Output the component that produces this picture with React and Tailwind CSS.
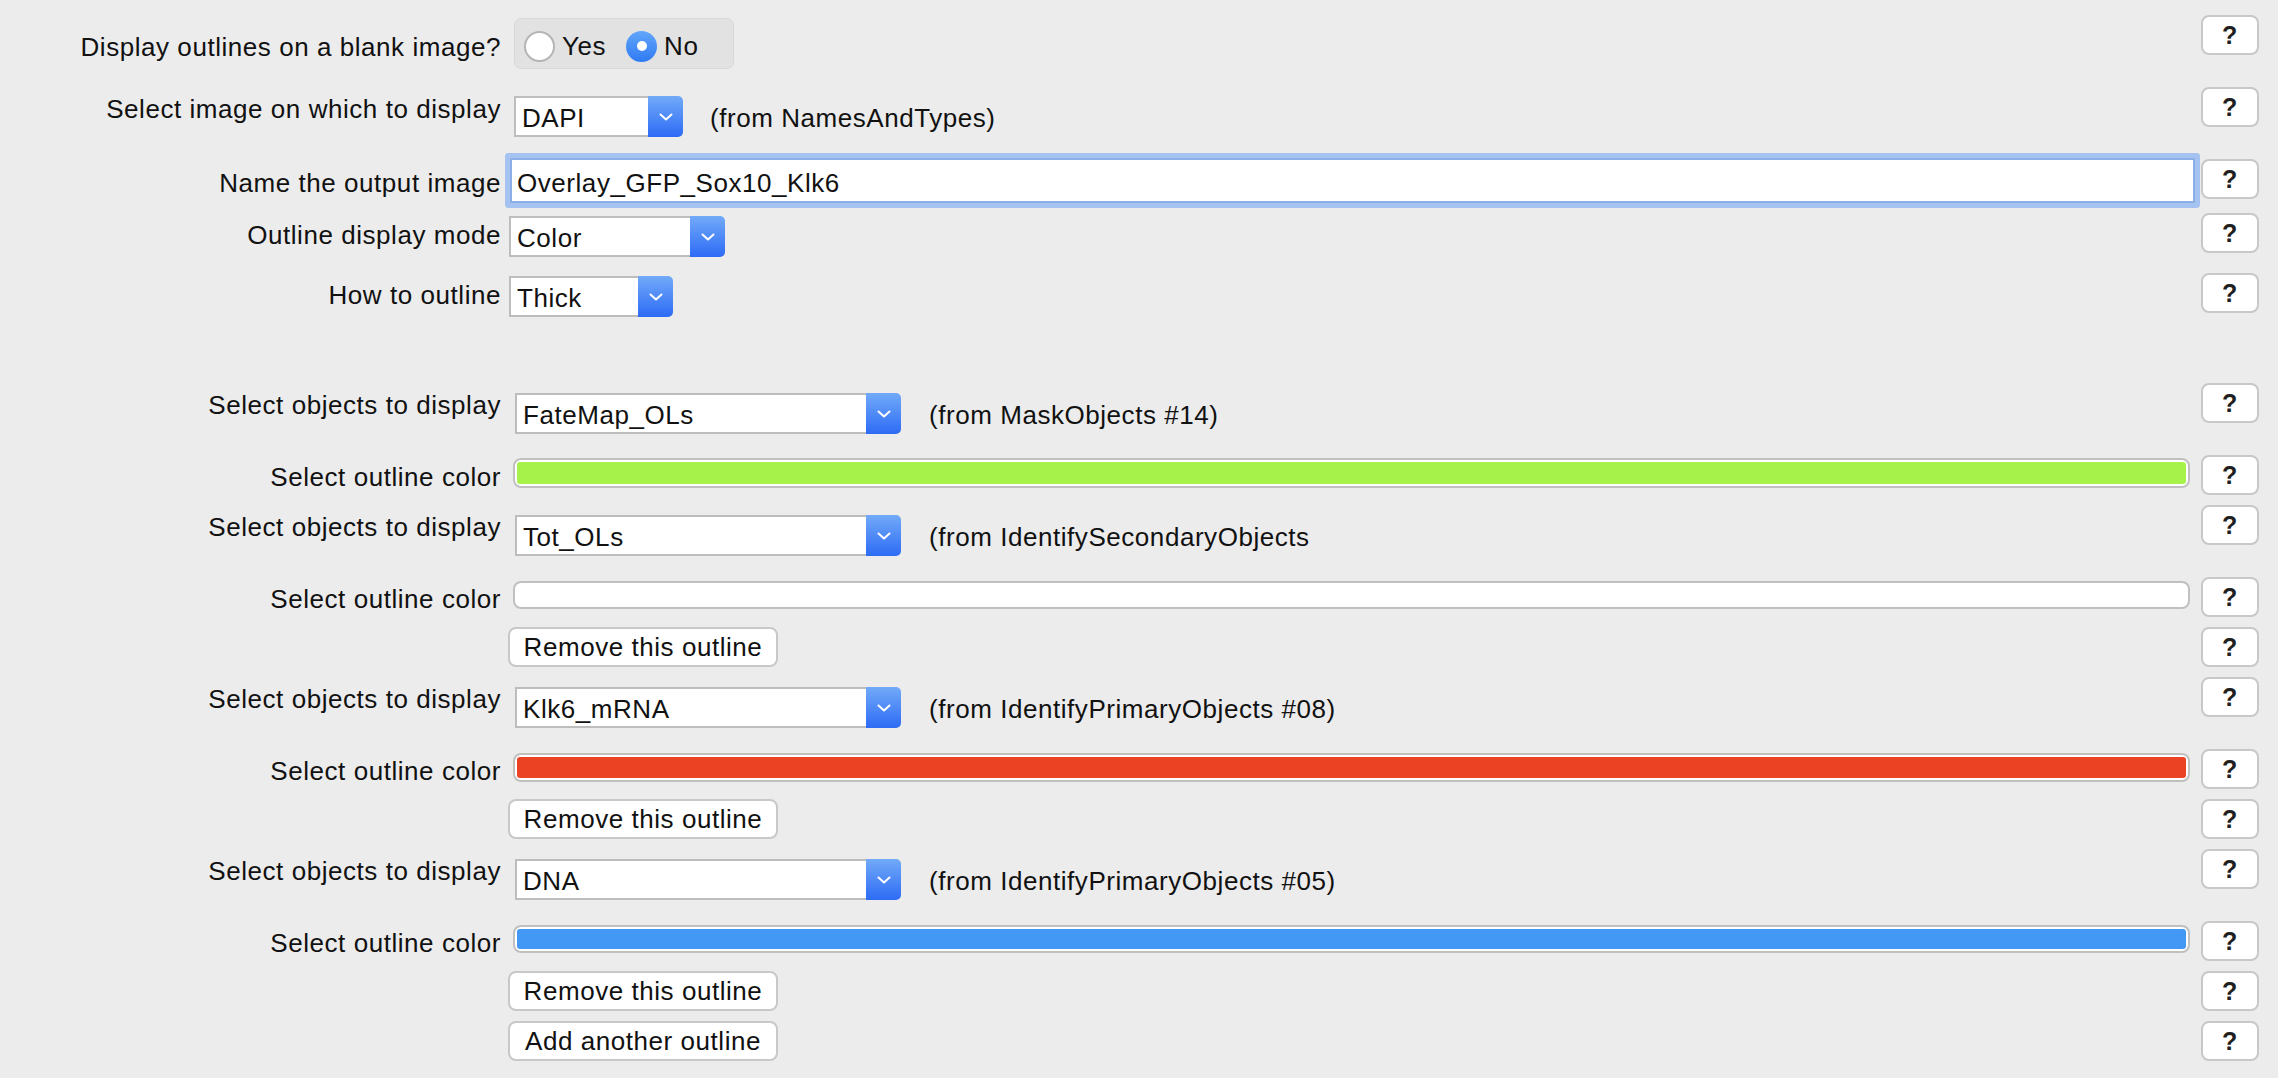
import React from "react";

function Help() {
  return (
    <div className="w-[58px] h-[40px] shrink-0 rounded-[8px] border-2 border-[#c8c8c8] bg-white flex items-center justify-center text-[25px] font-bold leading-none text-[#1f1f1f]">
      ?
    </div>
  );
}

function Label({ text, pad }) {
  return (
    <div className={`w-[501px] shrink-0 text-right leading-[30px] whitespace-nowrap ${pad}`}>
      {text}
    </div>
  );
}

function Chevron() {
  return (
    <svg width="14" height="8" viewBox="0 0 14 8" fill="none">
      <polyline points="1.5,1.5 7,6.5 12.5,1.5" stroke="white" strokeWidth="2" strokeLinecap="round" strokeLinejoin="round" />
    </svg>
  );
}

function Select({ w, value }) {
  return (
    <div className={`flex h-[41px] shrink-0 ${w}`}>
      <div className="flex-1 bg-white border-2 border-r-0 border-[#bdbdbd] pl-[6px] pt-[5px] leading-[30px] whitespace-nowrap overflow-hidden">
        {value}
      </div>
      <div className="w-[35px] h-[41px] rounded-r-[5px] bg-[linear-gradient(to_bottom,#72aaf8,#2d6bf5)] flex items-center justify-center">
        <Chevron />
      </div>
    </div>
  );
}

function Bar({ color, h }) {
  return (
    <div className={`flex-1 mr-[11px] ml-[12px] ${h} rounded-[8px] border-2 border-[#c0c0c0] bg-white p-[2px]`}>
      <div className={`w-full h-full rounded-[3px] ${color}`} />
    </div>
  );
}

function Button({ text }) {
  return (
    <div className="ml-[7px] w-[270px] h-[40px] rounded-[8px] border-2 border-[#c8c8c8] bg-white flex items-center justify-center leading-[30px] whitespace-nowrap">
      {text}
    </div>
  );
}

function ObjRow({ value, from }) {
  return (
    <div className="flex items-start h-[72px]">
      <Label text="Select objects to display" pad="pt-[7px]" />
      <div className="flex-1 flex items-start mt-[10px] ml-[14px]">
        <Select w="w-[386px]" value={value} />
        <div className="ml-[28px] pt-[7px] leading-[30px] whitespace-nowrap">{from}</div>
      </div>
      <Help />
    </div>
  );
}

function ColorRow({ color, h, mt }) {
  return (
    <div className="flex items-start h-[50px]">
      <Label text="Select outline color" pad="pt-[7px]" />
      <div className={`flex-1 flex ${mt}`}>
        <Bar color={color} h={h} />
      </div>
      <Help />
    </div>
  );
}

function ButtonRow({ text }) {
  return (
    <div className="flex items-start h-[50px]">
      <div className="w-[501px] shrink-0" />
      <div className="flex-1 flex">
        <Button text={text} />
      </div>
      <Help />
    </div>
  );
}

export default function App() {
  return (
    <div className="w-[2278px] h-[1078px] overflow-hidden bg-[#ececec] text-[26px] tracking-[0.55px] text-[#111] font-['Liberation_Sans',Arial,sans-serif]">
      <div className="pt-[15px] pr-[19px] flex flex-col">
        {/* Row 1 */}
        <div className="flex items-start h-[72px]">
          <Label text="Display outlines on a blank image?" pad="pt-[17px]" />
          <div className="flex-1 flex">
            <div className="ml-[13px] mt-[3px] w-[220px] h-[51px] rounded-[7px] bg-[#e2e2e2] border border-[#d9d9d9] flex items-center pl-[9px] pt-[5px]">
              <div className="w-[31px] h-[31px] rounded-full bg-white border-2 border-[#b5b5b5]" />
              <span className="ml-[7px] leading-[30px]">Yes</span>
              <div className="ml-[20px] w-[31px] h-[31px] rounded-full bg-[linear-gradient(to_bottom,#62a6fb,#2f7af2)] flex items-center justify-center">
                <div className="w-[10px] h-[10px] rounded-full bg-white" />
              </div>
              <span className="ml-[7px] leading-[30px]">No</span>
            </div>
          </div>
          <Help />
        </div>

        {/* Row 2 */}
        <div className="flex items-start h-[72px]">
          <Label text="Select image on which to display" pad="pt-[7px]" />
          <div className="flex-1 flex items-start mt-[9px] ml-[13px]">
            <Select w="w-[169px]" value="DAPI" />
            <div className="ml-[27px] pt-[7px] leading-[30px] whitespace-nowrap">(from NamesAndTypes)</div>
          </div>
          <Help />
        </div>

        {/* Row 3 */}
        <div className="flex items-start h-[54px]">
          <Label text="Name the output image" pad="pt-[9px]" />
          <div className="flex-1 flex -mt-px">
            <div className="flex-1 ml-[9px] mr-[6px] h-[45px] bg-white border-2 border-[#8cb0e6] rounded-[1px] shadow-[0_0_0_5px_#a4c3f0] pl-[5px] pt-[8px] leading-[30px] whitespace-nowrap">
              Overlay_GFP_Sox10_Klk6
            </div>
          </div>
          <Help />
        </div>

        {/* Row 4 */}
        <div className="flex items-start h-[60px]">
          <Label text="Outline display mode" pad="pt-[7px]" />
          <div className="flex-1 flex mt-[3px] ml-[8px]">
            <Select w="w-[216px]" value="Color" />
          </div>
          <Help />
        </div>

        {/* Row 5 */}
        <div className="flex items-start h-[110px]">
          <Label text="How to outline" pad="pt-[7px]" />
          <div className="flex-1 flex mt-[3px] ml-[8px]">
            <Select w="w-[164px]" value="Thick" />
          </div>
          <Help />
        </div>

        <ObjRow value="FateMap_OLs" from="(from MaskObjects #14)" />
        <ColorRow color="bg-[#a6f24a]" h="h-[30px]" mt="mt-[3px]" />
        <ObjRow value="Tot_OLs" from="(from IdentifySecondaryObjects" />
        <ColorRow color="bg-white" h="h-[28px]" mt="mt-[4px]" />
        <ButtonRow text="Remove this outline" />
        <ObjRow value="Klk6_mRNA" from="(from IdentifyPrimaryObjects #08)" />
        <ColorRow color="bg-[#eb4224]" h="h-[29px]" mt="mt-[4px]" />
        <ButtonRow text="Remove this outline" />
        <ObjRow value="DNA" from="(from IdentifyPrimaryObjects #05)" />
        <ColorRow color="bg-[#4398f5]" h="h-[28px]" mt="mt-[4px]" />
        <ButtonRow text="Remove this outline" />
        <ButtonRow text="Add another outline" />
      </div>
    </div>
  );
}
